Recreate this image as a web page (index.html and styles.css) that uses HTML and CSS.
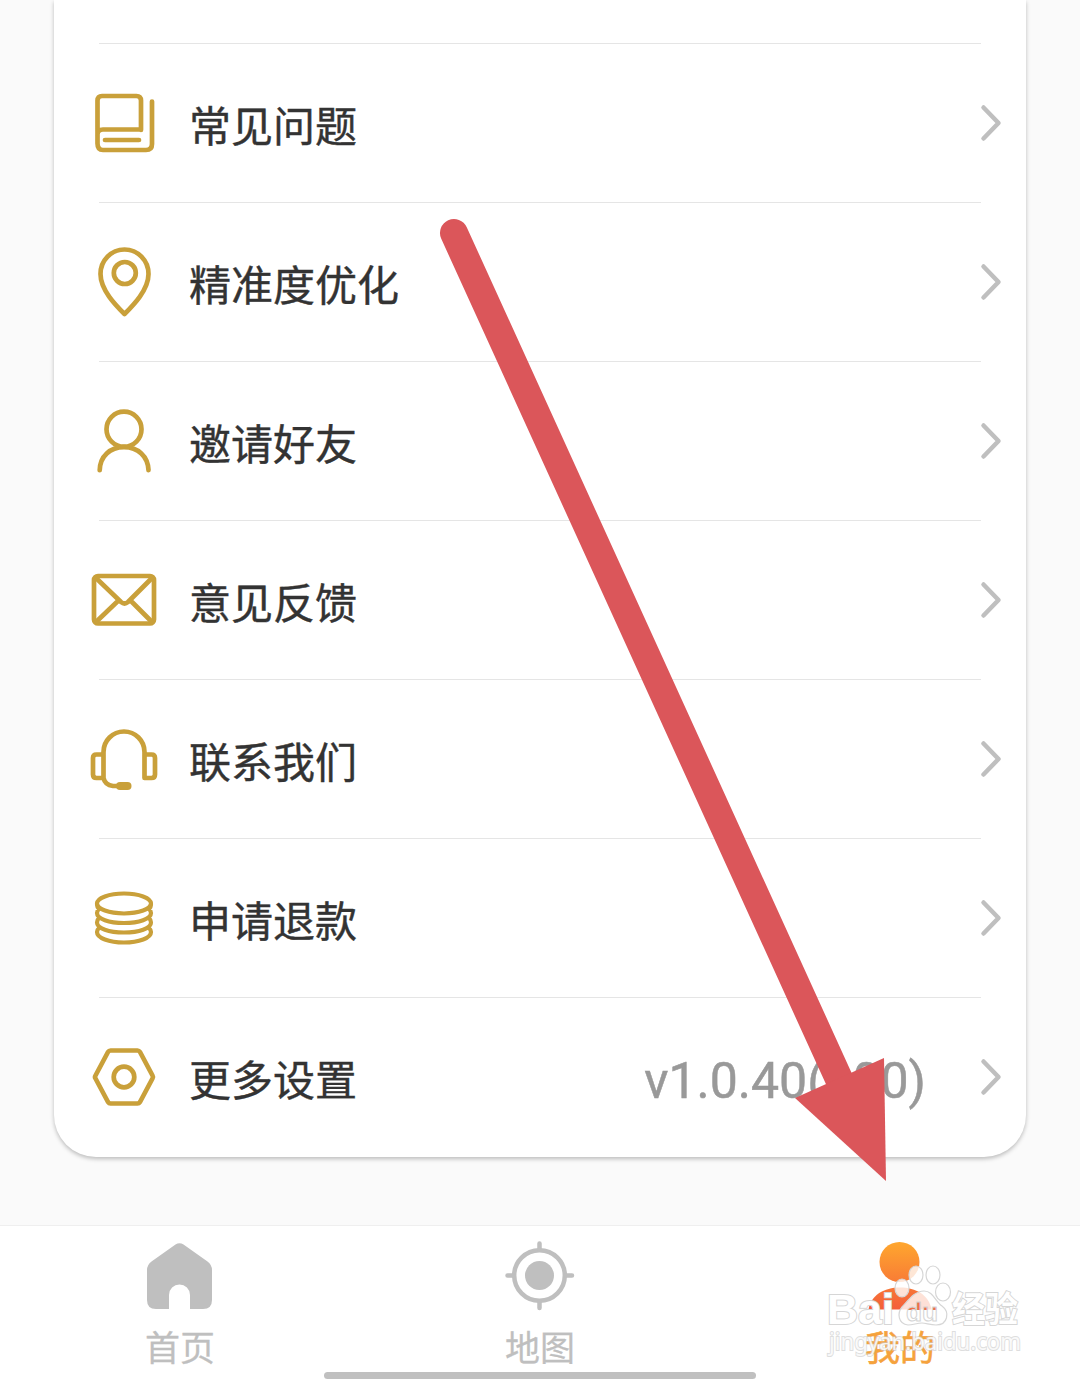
FILE: index.html
```html
<!DOCTYPE html>
<html lang="zh-CN">

<head>
    <meta charset="UTF-8">
    <meta name="viewport" content="width=device-width, initial-scale=1.0">
    <title>我的</title>
    <link rel="stylesheet" href="styles.css">
</head>

<body>

    <main>
        <div class="card">
            <div class="space"></div>

            <a class="row">
                <svg class="icon" viewBox="0 -1.500 72 72">
                    <path d="M53 41.500V12Q53 7.500 48.500 7.500H14Q9.500 7.500 9.500 12V55Q9.500 61.500 15 61.500H58Q64 61.500 64 55.500V13M9.500 46Q9.500 41 15 41H53M17 51.500H51" />
                </svg>
                <span class="label">常见问题</span>
                <svg class="seta" viewBox="0 0 24 40"><path d="M4.500 4.500L19.500 20L4.500 35.500" /></svg>
            </a>
            <a class="row">
                <svg class="icon" viewBox="0 -1 72 72">
                    <path d="M36.500 67C28 58.500 12.500 43 12.500 27A24 24.500 0 0 1 60.500 27C60.500 43 45 58.500 36.500 67Z" />
                    <circle cx="36.800" cy="26" r="11" />
                </svg>
                <span class="label">精准度优化</span>
                <svg class="seta" viewBox="0 0 24 40"><path d="M4.500 4.500L19.500 20L4.500 35.500" /></svg>
            </a>
            <a class="row">
                <svg class="icon" viewBox="0 -1.200 72 72">
                    <circle cx="36" cy="23" r="17.500" />
                    <path d="M11.700 64C12 50 22 41 36 41S60 50 60.500 64" />
                </svg>
                <span class="label">邀请好友</span>
                <svg class="seta" viewBox="0 0 24 40"><path d="M4.500 4.500L19.500 20L4.500 35.500" /></svg>
            </a>
            <a class="row">
                <svg class="icon" viewBox="0 -0.500 72 72">
                    <rect x="6" y="11.500" width="60" height="47.500" rx="4" />
                    <path d="M8 13.500L33 37.500Q36.500 40.500 40 37.500L64 13.500M8 57.500L31 35.500M64 57.500L42 35.500" />
                </svg>
                <span class="label">意见反馈</span>
                <svg class="seta" viewBox="0 0 24 40"><path d="M4.500 4.500L19.500 20L4.500 35.500" /></svg>
            </a>
            <a class="row">
                <svg class="icon" viewBox="0 0 72 72">
                    <path d="M15.500 55V29A20.500 20.500 0 0 1 56.500 29V55M15.500 31.500H8.500Q5 31.500 5 35V51.500Q5 55 8.500 55H15.500Q17 62 25 63H36M56.500 31.500H63.500Q67 31.500 67 35V51.500Q67 55 63.500 55H56.500" />
                    <path class="mic" d="M32 63H39.500" />
                </svg>
                <span class="label">联系我们</span>
                <svg class="seta" viewBox="0 0 24 40"><path d="M4.500 4.500L19.500 20L4.500 35.500" /></svg>
            </a>
            <a class="row">
                <svg class="icon thin" viewBox="0 0 72 72">
                    <ellipse cx="36" cy="21.500" rx="27" ry="10" />
                    <path d="M9 22Q9 25 11 27Q9 29 9 31C9 37 21 41 36 41S63 37 63 31Q63 29 61 27Q63 25 63 22M11 36Q9 38 9 40.500C9 46.500 21 50.500 36 50.500S63 46.500 63 40.500Q63 38 61 36M11 46Q9 48 9 50C9 56 21 60.500 36 60.500S63 56 63 50Q63 48 61 46" />
                </svg>
                <span class="label">申请退款</span>
                <svg class="seta" viewBox="0 0 24 40"><path d="M4.500 4.500L19.500 20L4.500 35.500" /></svg>
            </a>
            <a class="row">
                <svg class="icon" viewBox="0 0 72 72">
                    <path d="M22.500 9.500H49.500Q51 9.500 52 11L64.500 34.500Q65.500 36 64.500 37.500L52 61Q51 62.500 49.500 62.500H22.500Q21 62.500 20 61L7.500 37.500Q6.500 36 7.500 34.500L20 11Q21 9.500 22.500 9.500Z" />
                    <circle cx="36" cy="36" r="10.300" />
                </svg>
                <span class="label">更多设置</span>
                <span class="version">v1.0.40(100)</span>
                <svg class="seta" viewBox="0 0 24 40"><path d="M4.500 4.500L19.500 20L4.500 35.500" /></svg>
            </a>
        </div>
    </main>

    <nav>
        <a class="tab">
            <svg class="tab-icon" viewBox="0.500 0 72 72">
                <path d="M32 3.500Q36 1 40 3.500L64 20.500Q68.500 24 68.500 29V59Q68.500 68 59.500 68H46.500V54A10.500 10.500 0 0 0 25.500 54V68H12.500Q3.500 68 3.500 59V29Q3.500 24 8 20.500Z" />
            </svg>
            <span>首页</span>
        </a>
        <a class="tab">
            <svg class="tab-icon" viewBox="0 0 72 72">
                <circle cx="35.500" cy="34.500" r="14.500" />
                <circle class="ring" cx="35.500" cy="34.500" r="25.300" />
                <path class="ring" d="M35.500 2.500V8M35.500 61V67M3.500 34.500H9M62 34.500H68" />
            </svg>
            <span>地图</span>
        </a>
        <a class="tab active">
            <svg class="tab-icon" viewBox="0 1 72 72">
                <defs>
                    <linearGradient id="laranja" gradientUnits="userSpaceOnUse" x1="36" y1="0" x2="36" y2="68">
                        <stop offset="0" stop-color="#ffa92e" />
                        <stop offset="1" stop-color="#f4603a" />
                    </linearGradient>
                </defs>
                <circle cx="35.500" cy="22" r="20" fill="url(#laranja)" />
                <path d="M4.500 69.500C7 55 20 47.500 36 47.500S65 55 67.500 69.500Z" fill="url(#laranja)" />
            </svg>
            <span>我的</span>
        </a>
        <div class="home-bar"></div>
    </nav>

    <svg class="arrow" viewBox="0 0 1080 1380">
        <path d="M454 233L844 1090" />
        <polygon points="884,1058 886,1181 795,1098" />
    </svg>

    <svg class="watermark" viewBox="0 0 210 110">
        <defs>
            <linearGradient id="letra" gradientUnits="userSpaceOnUse" x1="0" y1="48" x2="0" y2="68">
                <stop offset="0.350" stop-color="#ef7048" />
                <stop offset="0.350" stop-color="#ffffff" />
            </linearGradient>
        </defs>
        <g class="marca">
            <text x="7" y="69" font-size="43" textLength="67" lengthAdjust="spacingAndGlyphs">Bai</text>
            <path d="M104 36C113 36 115 46 122 51C130 57 128 70 116 70C110 70 106 68 102 68C97 68 93 70 88 70C78 69 77 58 82 52C88 46 94 36 104 36Z" />
            <ellipse cx="82" cy="33" rx="7" ry="9" />
            <ellipse cx="96" cy="20" rx="7" ry="9" />
            <ellipse cx="113" cy="20" rx="7" ry="9" />
            <ellipse cx="123" cy="37" rx="7.500" ry="9" />
            <text x="132" y="67" font-size="35" textLength="66" lengthAdjust="spacingAndGlyphs">经验</text>
            <text class="url" x="9" y="95" font-size="24" textLength="192" lengthAdjust="spacingAndGlyphs">jingyan.baidu.com</text>
        </g>
        <text class="du" x="86" y="66" font-size="25" textLength="32" lengthAdjust="spacingAndGlyphs">du</text>
    </svg>

</body>

</html>
```

FILE: styles.css
```css
body {
    font-family: Roboto, "Noto Sans CJK SC", sans-serif;
    margin: 0;
    height: 1380px;
    display: flex;
    flex-direction: column;
    position: relative;
    overflow: hidden;
    background-color: #fafafa;
}

main {
    height: 1225px;
    padding: 0 54px;
}

.card {
    padding-bottom: 1px;
    background-color: white;
    border-radius: 0 0 42px 42px;
    box-shadow: 0 2px 4px rgba(0, 0, 0, 0.25);
}

.space {
    height: 43px;
}

.row {
    height: 159px;
    padding: 1px 23px 0 34px;
    display: flex;
    align-items: center;
    box-sizing: border-box;
    background: linear-gradient(#e5e5e5, #e5e5e5) 45px 0 / 882px 1px no-repeat;
}

.icon {
    width: 72px;
    height: 72px;
    fill: none;
    stroke: #c9a03a;
    stroke-width: 4.7;
    stroke-linecap: round;
    stroke-linejoin: round;
}

.icon.thin {
    stroke-width: 4.2;
}

.mic {
    stroke-width: 8;
}

.label {
    flex: 1;
    margin-left: 29px;
    padding-top: 10px;
    font-size: 42px;
    line-height: 60px;
    color: #333;
    -webkit-text-stroke: 0.4px #333;
}

.version {
    margin-right: 53px;
    padding-top: 8px;
    font-size: 50px;
    line-height: 60px;
    color: #999;
    -webkit-text-stroke: 0.5px #999;
}

.seta {
    width: 24px;
    height: 40px;
    fill: none;
    stroke: #bfbfbf;
    stroke-width: 4.5;
    stroke-linecap: round;
    stroke-linejoin: round;
}

nav {
    height: 155px;
    box-sizing: border-box;
    border-top: 1px solid #efefef;
    background-color: white;
    display: grid;
    grid-template-columns: repeat(3, 1fr);
    grid-template-rows: 146px 7px;
}

.tab {
    padding-top: 15px;
    display: flex;
    flex-direction: column;
    align-items: center;
    font-size: 35px;
    line-height: 40px;
    color: #bfbfbf;
    -webkit-text-stroke: 0.3px #bfbfbf;
}

.tab span {
    margin-top: 17px;
}

.tab-icon {
    width: 72px;
    height: 72px;
    fill: #bfbfbf;
}

.ring {
    fill: none;
    stroke: #bfbfbf;
    stroke-width: 4.5;
    stroke-linecap: round;
}

.active {
    color: #f5a23c;
    -webkit-text-stroke: 0.6px #f5a23c;
}

.home-bar {
    grid-column: 1 / 4;
    width: 432px;
    height: 7px;
    margin: 0 auto;
    border-radius: 4px;
    background-color: #c0c0c0;
}

.arrow {
    position: absolute;
    top: 0;
    left: 0;
    width: 1080px;
    height: 1380px;
    fill: #db565a;
}

.arrow path {
    stroke: #db565a;
    stroke-width: 28;
    stroke-linecap: round;
}

/* marca d'agua por cima da barra */
.watermark {
    position: absolute;
    left: 820px;
    top: 1255px;
    width: 210px;
    height: 110px;
    font-family: "Liberation Sans", "Noto Sans CJK SC", sans-serif;
    font-weight: bold;
}

.marca {
    fill: rgba(255, 255, 255, 0.8);
    stroke: #d6d6d6;
    stroke-width: 1.2;
}

.marca text {
    fill: white;
    stroke-width: 2;
    paint-order: stroke;
}

.marca .url {
    font-family: "Noto Sans", sans-serif;
    font-weight: normal;
    fill: rgba(255, 255, 255, 0.85);
    stroke: rgba(200, 200, 200, 0.6);
}

.du {
    fill: url(#letra);
    stroke: #d5d5d5;
    stroke-width: 1;
}
```
